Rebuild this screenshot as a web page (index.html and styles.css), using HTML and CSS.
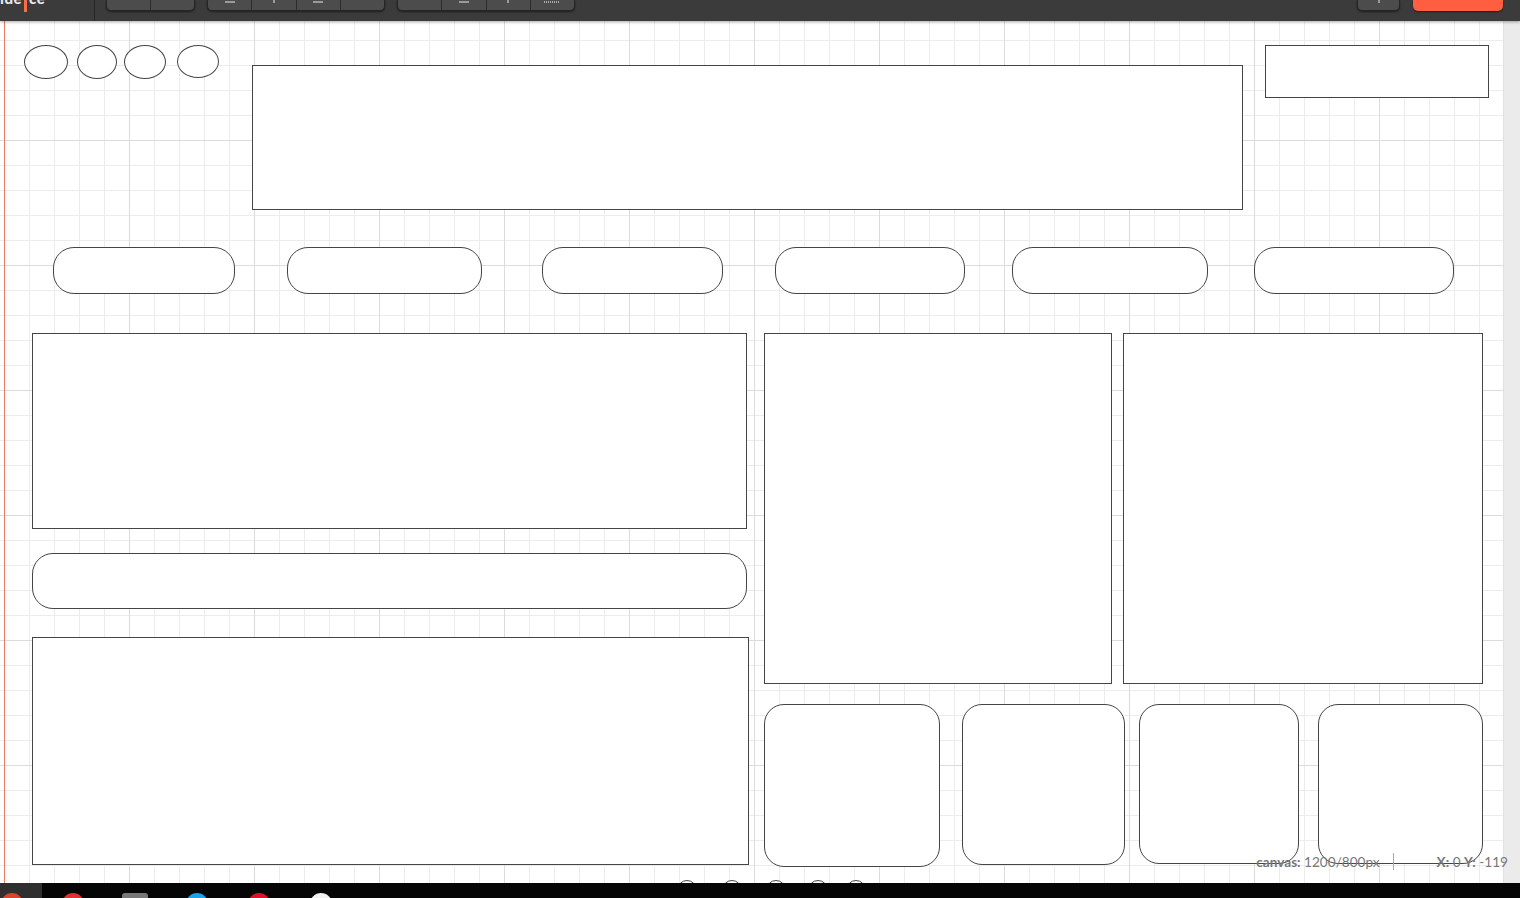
FILE: index.html
```html
<!DOCTYPE html>
<html>
<head>
<meta charset="utf-8">
<link rel="stylesheet" href="styles.css">
</head>
<body>
<div class="app">
  <header class="toolbar">
    <div class="logo"><span>ide</span><i class="logo-bar"></i><span>ce</span></div>
    <div class="sep"></div>
    <div class="tools">
      <div class="group g1"><span class="btn"></span><span class="btn"></span></div>
      <div class="group g2"><span class="btn"><b class="ic"></b></span><span class="btn"><b class="ic dot"></b></span><span class="btn"><b class="ic"></b></span><span class="btn"></span></div>
      <div class="group g3"><span class="btn"></span><span class="btn"><b class="ic"></b></span><span class="btn"><b class="ic dot"></b></span><span class="btn"><b class="ic dots"></b></span></div>
    </div>
    <div class="right-tools">
      <span class="btn single"><b class="ic dot"></b></span>
      <span class="btn save"></span>
    </div>
  </header>
  <main class="workspace">
    <section class="canvas">
      <div class="origin-line"></div>
      <div class="shape ellipse" style="left:24px;top:24px;width:44px;height:34px"></div>
      <div class="shape ellipse" style="left:77px;top:24px;width:40px;height:34px"></div>
      <div class="shape ellipse" style="left:124px;top:24px;width:42px;height:34px"></div>
      <div class="shape ellipse" style="left:177px;top:24px;width:42px;height:33px"></div>

      <div class="shape rect" style="left:252px;top:44px;width:991px;height:145px"></div>
      <div class="shape rect" style="left:1265px;top:24px;width:224px;height:53px"></div>

      <div class="shape pill" style="left:53px;top:226px;width:182px;height:47px"></div>
      <div class="shape pill" style="left:287px;top:226px;width:195px;height:47px"></div>
      <div class="shape pill" style="left:542px;top:226px;width:181px;height:47px"></div>
      <div class="shape pill" style="left:775px;top:226px;width:190px;height:47px"></div>
      <div class="shape pill" style="left:1012px;top:226px;width:196px;height:47px"></div>
      <div class="shape pill" style="left:1254px;top:226px;width:200px;height:47px"></div>

      <div class="shape rect" style="left:32px;top:312px;width:715px;height:196px"></div>
      <div class="shape pill" style="left:32px;top:532px;width:715px;height:56px"></div>
      <div class="shape rect" style="left:32px;top:616px;width:717px;height:228px"></div>

      <div class="shape rect" style="left:764px;top:312px;width:348px;height:351px"></div>
      <div class="shape rect" style="left:1123px;top:312px;width:360px;height:351px"></div>

      <div class="shape rounded" style="left:764px;top:683px;width:176px;height:163px"></div>
      <div class="shape rounded" style="left:962px;top:683px;width:163px;height:161px"></div>
      <div class="shape rounded" style="left:1139px;top:683px;width:160px;height:160px"></div>
      <div class="shape rounded" style="left:1318px;top:683px;width:165px;height:160px"></div>

      <div class="shape circle" style="left:677px;top:859px"></div>
      <div class="shape circle" style="left:722px;top:859px"></div>
      <div class="shape circle" style="left:766px;top:859px"></div>
      <div class="shape circle" style="left:808px;top:859px"></div>
      <div class="shape circle" style="left:846px;top:859px"></div>
    </section>
    <aside class="side-strip"></aside>
    <div class="status">
      <span class="stat"><b>canvas:</b> 1200/800px</span>
      <span class="stat-sep"></span>
      <span class="stat"><b>X:</b> 0 <b>Y:</b> -119</span>
    </div>
  </main>
  <footer class="taskbar">
    <span class="task first"><i class="tk red"></i></span>
    <span class="task"><i class="tk redwhite"></i></span>
    <span class="task"><i class="tk grey"></i></span>
    <span class="task"><i class="tk blue"></i></span>
    <span class="task"><i class="tk badge"></i></span>
    <span class="task"><i class="tk white"></i></span>
  </footer>
</div>
</body>
</html>
```
FILE: styles.css
```css
* { box-sizing: border-box; margin: 0; padding: 0; }
html, body { width: 1520px; height: 898px; overflow: hidden; background: #000; }
body { font-family: Lato, "Liberation Sans", sans-serif; }

.app { display: flex; flex-direction: column; width: 1520px; height: 898px; }

.toolbar {
  height: 21px;
  flex: none;
  background: #3b3b3b;
  display: flex;
  align-items: flex-start;
  position: relative;
  z-index: 2;
  box-shadow: 0 1px 3px rgba(0,0,0,0.35);
  overflow: hidden;
}
.logo {
  width: 94px;
  height: 21px;
  display: flex;
  align-items: flex-start;
  color: #e8e8e8;
  font-weight: 900;
  font-size: 15px;
  letter-spacing: 0.5px;
  overflow: hidden;
}
.logo span { display: block; height: 4px; line-height: 0px; margin-top: -2px; }
.logo-bar { display: block; width: 3px; height: 12px; background: #ff6a48; margin: 0 2px; }
.sep { width: 1px; height: 21px; background: #262626; }
.tools { display: flex; gap: 12px; margin-left: 11px; }
.group {
  display: flex;
  height: 11px;
  border: 1px solid #252525;
  border-top: none;
  border-radius: 0 0 5px 5px;
  background: #4c4c4c;
  box-shadow: 0 1px 2px rgba(0,0,0,0.5);
  overflow: hidden;
}
.g1 { width: 89px; }
.g2, .g3 { width: 178px; }
.btn {
  flex: 1;
  height: 100%;
  border-right: 1px solid #2c2c2c;
  display: flex;
  justify-content: center;
  align-items: flex-end;
  padding-bottom: 7px;
}
.btn:last-child { border-right: none; }
.ic { display: block; width: 10px; height: 2px; background: #9a9a9a; }
.ic.dot { width: 2px; height: 3px; }
.ic.dots { width: 16px; height: 2px; background: repeating-linear-gradient(90deg, #aaa 0 1px, transparent 1px 2px); }
.right-tools { margin-left: auto; display: flex; gap: 13px; margin-right: 17px; }
.btn.single {
  flex: none; width: 43px; height: 11px;
  background: #4c4c4c; border: 1px solid #252525; border-top: none;
  border-radius: 0 0 5px 5px; box-shadow: 0 1px 2px rgba(0,0,0,0.5);
}
.btn.save {
  flex: none; width: 90px; height: 11px;
  background: #ff5f40; border: none;
  border-radius: 0 0 5px 5px; box-shadow: 0 1px 2px rgba(0,0,0,0.5);
}

.workspace { flex: none; height: 862px; display: flex; position: relative; }
.canvas {
  width: 1503px;
  height: 862px;
  position: relative;
  overflow: hidden;
  background-color: #fff;
  background-image:
    linear-gradient(90deg, #dcdcdc 1px, transparent 1px),
    linear-gradient(180deg, #dcdcdc 1px, transparent 1px),
    linear-gradient(90deg, #ececec 1px, transparent 1px),
    linear-gradient(180deg, #ececec 1px, transparent 1px);
  background-size: 125px 125px, 125px 125px, 25px 25px, 25px 25px;
  background-position: 4px 0, 0 119px, 4px 0, 0 19px;
}
.side-strip { width: 17px; height: 862px; background: #ebebeb; border-left: 1px solid #e0e0e0; }
.origin-line { position: absolute; left: 4px; top: 0; width: 1px; height: 100%; background: #f07b5f; }

.shape { position: absolute; background: #fff; border: 1px solid #454545; }
.ellipse { border-radius: 50%; }
.rect { border-radius: 0; }
.pill { border-radius: 21px; }
.rounded { border-radius: 20px; }
.circle { width: 20px; height: 20px; border-radius: 50%; }

.status {
  position: absolute;
  right: 12px;
  top: 832px;
  display: flex;
  align-items: center;
  font-size: 13.6px;
  color: #777;
  line-height: 16px;
  white-space: nowrap;
}
.stat b { font-weight: 700; color: #777; }
.stat-sep { width: 1px; height: 17px; background: #aaa; margin: 0 43px 0 13px; }

.taskbar {
  flex: none;
  height: 15px;
  background: #050505;
  display: flex;
  align-items: flex-start;
  overflow: hidden;
}
.task { width: 62px; height: 15px; display: flex; justify-content: center; padding-top: 10px; }
.task.first { width: 42px; background: #2f2f2f; justify-content: flex-start; padding-left: 1px; }
.tk { display: block; width: 22px; height: 22px; border-radius: 50%; }
.tk.red { background: #d9442e; }
.tk.redwhite { background: radial-gradient(circle, #fff 40%, #e03030 42%); }
.tk.grey { background: #777; border-radius: 3px; width: 26px; }
.tk.blue { background: #1aa3e8; }
.tk.badge { background: #e0102a; }
.tk.white { background: #f2f2f2; }
```
